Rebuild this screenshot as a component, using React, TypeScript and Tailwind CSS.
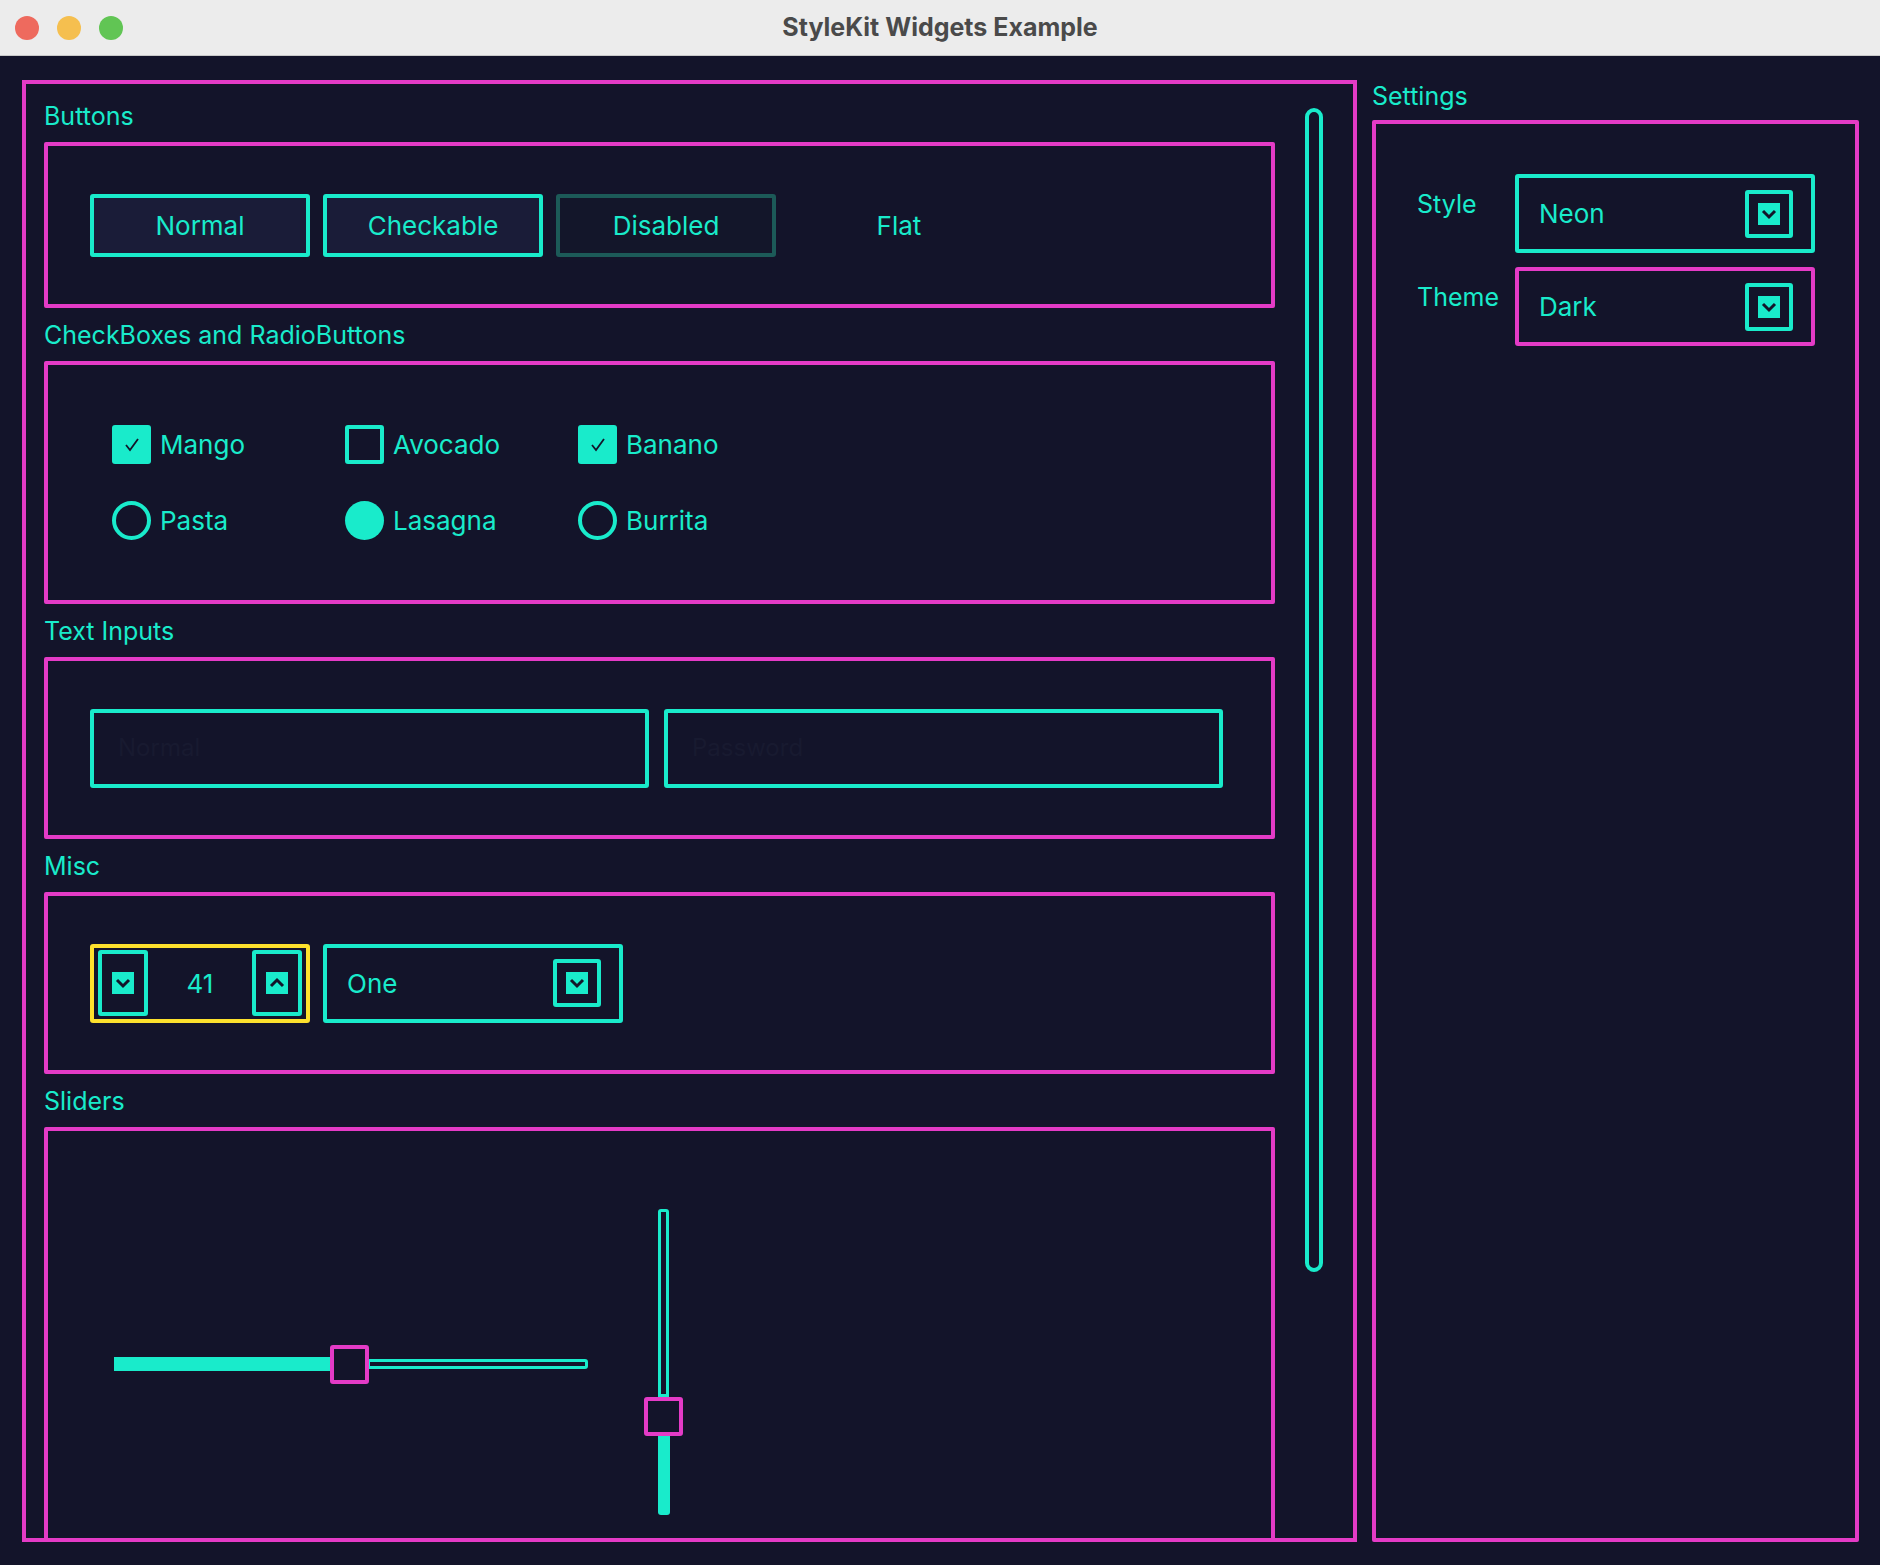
import React from 'react';

const TEAL = '#19ebcb';

const Chevron = ({ up = false }: { up?: boolean }) => (
  <svg width="22" height="22" viewBox="0 0 22 22">
    <rect width="22" height="22" fill={TEAL} />
    <path d={up ? 'M5 14 L11 8 L17 14' : 'M5 8 L11 14 L17 8'} stroke="#13152a" strokeWidth="3" fill="none" />
  </svg>
);

const Section = ({ title, className, children }: { title: string; className: string; children: React.ReactNode }) => (
  <div className="flex flex-col">
    <div className="h-[50px] flex items-center text-[25px] text-[#19ebcb]">{title}</div>
    <div className={`border-[4px] border-[#e43bc6] rounded-[2px] ${className}`}>{children}</div>
  </div>
);

const Combo = ({ label, magenta = false, w }: { label: string; magenta?: boolean; w: string }) => (
  <div className={`flex items-center justify-between ${w} h-[79px] border-[4px] rounded-[3px] pl-[20px] pr-[18px] ${magenta ? 'border-[#e43bc6]' : 'border-[#19ebcb]'}`}>
    <span className="text-[26px] text-[#19ebcb]">{label}</span>
    <div className="w-[48px] h-[48px] border-[4px] border-[#19ebcb] rounded-[3px] flex items-center justify-center">
      <Chevron />
    </div>
  </div>
);

const Check = ({ label, on }: { label: string; on: boolean }) => (
  <div className="w-[233px] flex items-center gap-[9px]">
    <div className={`w-[39px] h-[39px] rounded-[3px] flex items-center justify-center ${on ? 'bg-[#19ebcb]' : 'border-[4px] border-[#19ebcb]'}`}>
      {on && (
        <svg width="20" height="20" viewBox="0 0 20 20">
          <path d="M4 10 L8 15 L16 4" stroke="#13152a" strokeWidth="1.8" fill="none" />
        </svg>
      )}
    </div>
    <span className="text-[26px] text-[#19ebcb]">{label}</span>
  </div>
);

const Radio = ({ label, on }: { label: string; on: boolean }) => (
  <div className="w-[233px] flex items-center gap-[9px]">
    <div className={`w-[39px] h-[39px] rounded-full ${on ? 'bg-[#19ebcb]' : 'border-[4px] border-[#19ebcb]'}`} />
    <span className="text-[26px] text-[#19ebcb]">{label}</span>
  </div>
);

const Btn = ({ label, disabled = false }: { label: string; disabled?: boolean }) => (
  <div className={`w-[220px] h-[63px] rounded-[3px] border-[4px] flex items-center justify-center text-[26px] text-[#19ebcb] ${disabled ? 'border-[#1c5a58] bg-[#13162a]' : 'border-[#19ebcb] bg-[#1a1c38]'}`}>
    {label}
  </div>
);

export default function App() {
  return (
    <div className="w-[1880px] h-[1565px] bg-[#13142a] flex flex-col overflow-hidden" style={{ fontFamily: 'Inter, "Noto Sans", sans-serif' }}>
      <div className="h-[56px] bg-[#ececec] border-b border-[#c9c9c9] flex items-center relative shrink-0">
        <div className="flex gap-[18px] pl-[15px]">
          <div className="w-[24px] h-[24px] rounded-full bg-[#ee6a5e]" />
          <div className="w-[24px] h-[24px] rounded-full bg-[#f5bf4f]" />
          <div className="w-[24px] h-[24px] rounded-full bg-[#61c554]" />
        </div>
        <div className="absolute inset-0 flex items-center justify-center text-[25px] font-bold text-[#4a4a4a]">StyleKit Widgets Example</div>
      </div>
      <div className="flex flex-1 pt-[24px] pl-[22px] pr-[21px]">
        {/* main scroll area */}
        <div className="w-[1335px] h-[1462px] border-[4px] border-[#e43bc6] flex overflow-hidden">
          <div className="w-[1249px] pl-[18px] pt-[8px] flex flex-col gap-[3px]">
            <Section title="Buttons" className="h-[166px] flex items-center gap-[13px] pl-[42px]">
              <Btn label="Normal" />
              <Btn label="Checkable" />
              <Btn label="Disabled" disabled />
              <div className="w-[220px] text-center text-[26px] text-[#19ebcb]">Flat</div>
            </Section>
            <Section title="CheckBoxes and RadioButtons" className="h-[243px] flex flex-col justify-center gap-[37px] pl-[64px]">
              <div className="flex">
                <Check label="Mango" on />
                <Check label="Avocado" on={false} />
                <Check label="Banano" on />
              </div>
              <div className="flex">
                <Radio label="Pasta" on={false} />
                <Radio label="Lasagna" on />
                <Radio label="Burrita" on={false} />
              </div>
            </Section>
            <Section title="Text Inputs" className="h-[182px] flex items-center gap-[15px] pl-[42px]">
              <div className="w-[559px] h-[79px] border-[4px] border-[#19ebcb] rounded-[3px] flex items-center pl-[24px] text-[24px] text-[#181a30]">Normal</div>
              <div className="w-[559px] h-[79px] border-[4px] border-[#19ebcb] rounded-[3px] flex items-center pl-[24px] text-[24px] text-[#181a30]">Password</div>
            </Section>
            <Section title="Misc" className="h-[182px] flex items-center gap-[13px] pl-[42px]">
              <div className="w-[220px] h-[79px] border-[4px] border-[#fde12d] rounded-[3px] flex items-center justify-between px-[4px]">
                <div className="w-[50px] h-[66px] border-[4px] border-[#19ebcb] rounded-[3px] flex items-center justify-center"><Chevron /></div>
                <span className="text-[26px] text-[#19ebcb]">41</span>
                <div className="w-[50px] h-[66px] border-[4px] border-[#19ebcb] rounded-[3px] flex items-center justify-center"><Chevron up /></div>
              </div>
              <Combo label="One" w="w-[300px]" />
            </Section>
            <Section title="Sliders" className="h-[440px] pl-[66px] pt-[78px] flex items-start gap-[56px]">
              <div className="w-[474px] h-[44px] flex items-center mt-[133px]">
                <div className="w-[218px] h-[14px] bg-[#19ebcb]" />
                <div className="w-[39px] h-[39px] border-[4px] border-[#e43bc6] rounded-[3px] bg-[#13142a] -mx-[2px] relative shrink-0" />
                <div className="flex-1 h-[10px] border-[3px] border-[#19ebcb] rounded-r-[3px]" />
              </div>
              <div className="w-[39px] h-[306px] flex flex-col items-center">
                <div className="w-[11px] h-[188px] border-[3px] border-[#19ebcb] rounded-t-[3px]" />
                <div className="w-[39px] h-[39px] border-[4px] border-[#e43bc6] rounded-[3px] bg-[#13142a] shrink-0" />
                <div className="w-[12px] flex-1 bg-[#19ebcb] rounded-b-[3px]" />
              </div>
            </Section>
          </div>
          <div className="flex-1 flex justify-center pt-[24px]">
            <div className="w-[18px] h-[1164px] border-[4px] border-[#19ebcb] rounded-full" />
          </div>
        </div>
        {/* settings */}
        <div className="flex-1 pl-[15px] pt-[6px] flex flex-col">
          <div className="h-[34px] text-[25px] leading-[20px] text-[#19ebcb]">Settings</div>
          <div className="h-[1422px] border-[4px] border-[#e43bc6] rounded-[2px] pt-[50px] pl-[41px] flex flex-col gap-[14px]">
            <div className="flex items-center gap-[10px]">
              <div className="w-[88px] text-[25px] text-[#19ebcb] -mt-[18px]">Style</div>
              <Combo label="Neon" w="w-[300px]" />
            </div>
            <div className="flex items-center gap-[10px]">
              <div className="w-[88px] text-[25px] text-[#19ebcb] -mt-[18px]">Theme</div>
              <Combo label="Dark" magenta w="w-[300px]" />
            </div>
          </div>
        </div>
      </div>
    </div>
  );
}
